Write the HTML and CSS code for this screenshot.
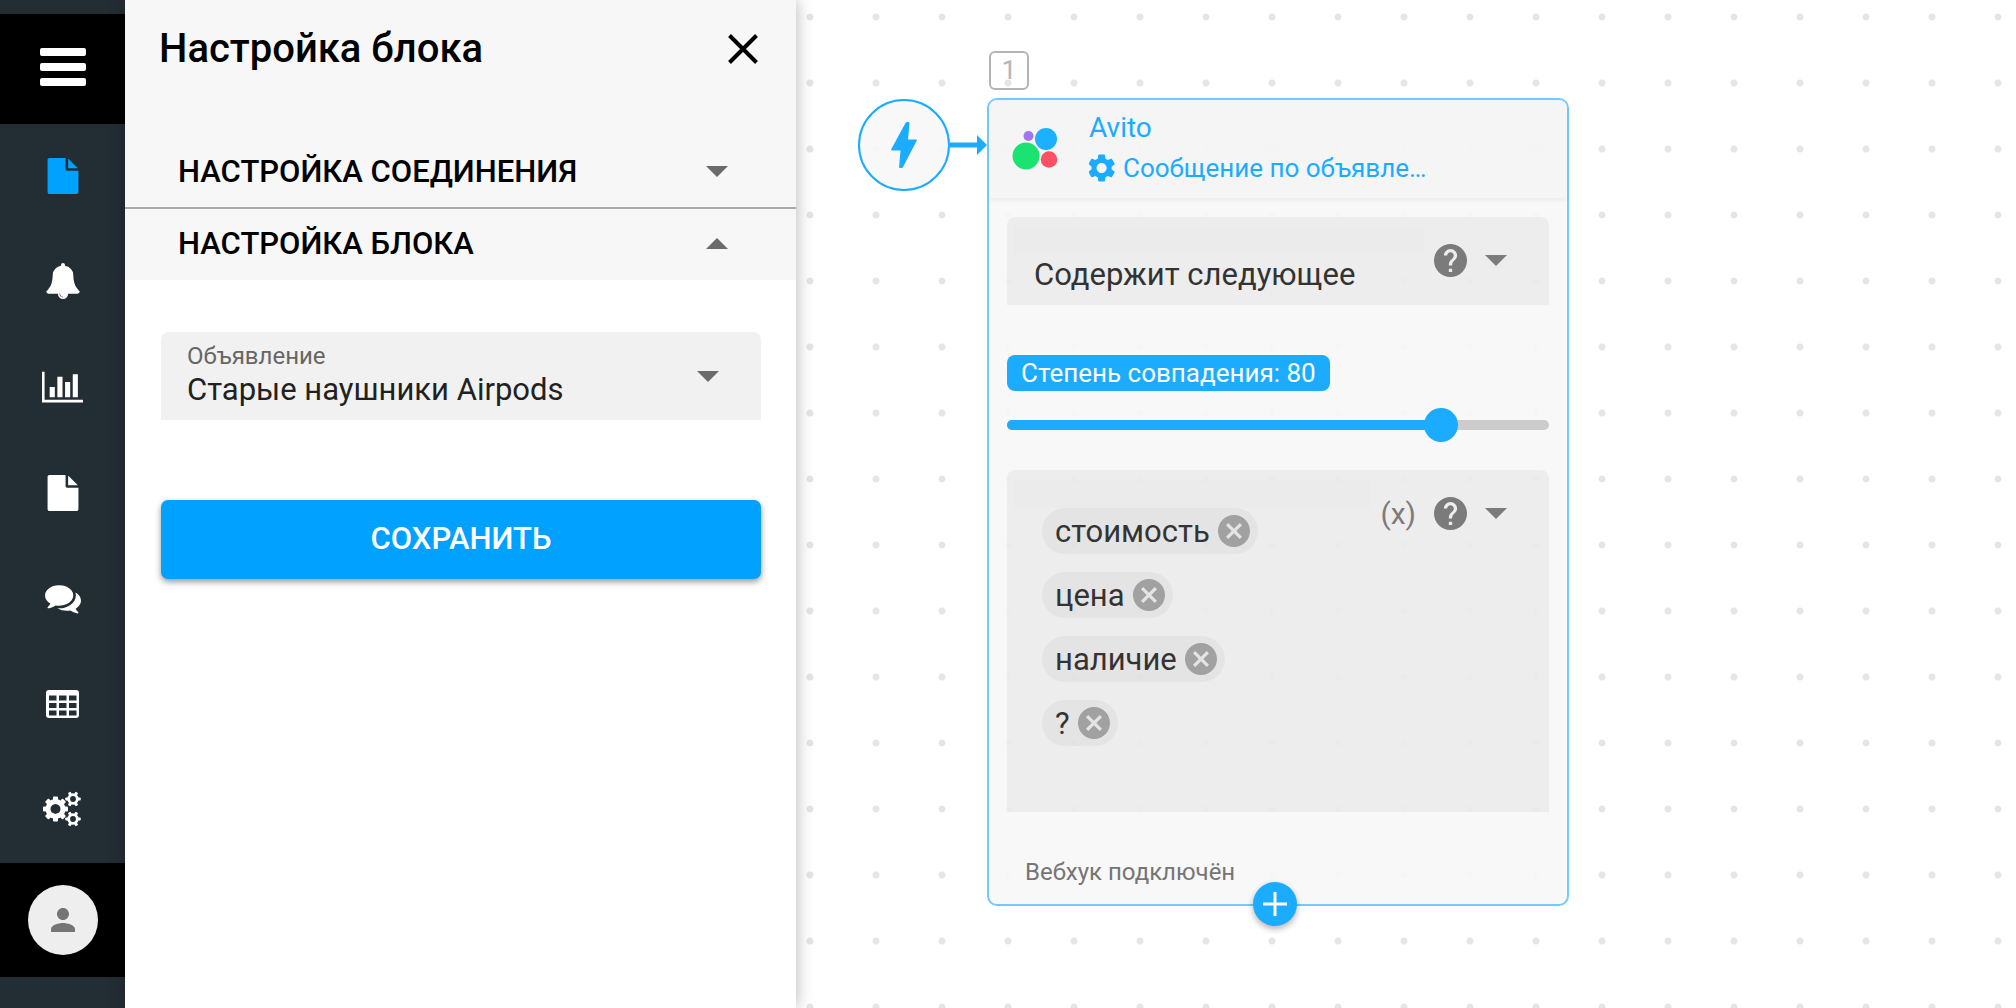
FILE: index.html
```html
<!DOCTYPE html>
<html lang="ru">

<head>
    <meta charset="UTF-8">
    <meta name="viewport" content="width=device-width, initial-scale=1.0">
    <link rel="stylesheet" href="styles.css">
    <title>Настройка блока</title>
</head>

<body>

    <!-- icons used more than once -->
    <svg class="sprite" aria-hidden="true">
        <symbol id="icon-file" viewBox="0 0 1792 1792">
            <path d="M1152 512v-472q22 14 36 28l408 408q14 14 28 36h-472zm-128 32q0 40 28 68t68 28h544v1056q0 40-28 68t-68 28h-1344q-40 0-68-28t-28-68v-1600q0-40 28-68t68-28h800v544z" />
        </symbol>
        <symbol id="icon-help" viewBox="2 2 20 20">
            <path d="M12 2C6.48 2 2 6.48 2 12s4.48 10 10 10 10-4.48 10-10S17.52 2 12 2zm1 17h-2v-2h2v2zm2.07-7.75l-.9.92C13.45 12.9 13 13.5 13 15h-2v-.5c0-1.1.45-2.1 1.17-2.83l1.24-1.26c.37-.36.59-.86.59-1.41 0-1.1-.9-2-2-2s-2 .9-2 2H8c0-2.21 1.79-4 4-4s4 1.79 4 4c0 .88-.36 1.68-.93 2.25z" />
        </symbol>
        <symbol id="icon-cancel" viewBox="2 2 20 20">
            <path d="M12 2C6.47 2 2 6.47 2 12s4.47 10 10 10 10-4.47 10-10S17.53 2 12 2zm5 13.59L15.59 17 12 13.41 8.41 17 7 15.59 10.59 12 7 8.41 8.41 7 12 10.59 15.59 7 17 8.41 13.41 12 17 15.59z" />
        </symbol>
        <symbol id="icon-cog-small" viewBox="-8 -8 16 16">
            <circle r="4.3" fill="none" stroke="currentColor" stroke-width="2.8" />
            <rect x="-1.5" y="-7.7" width="3" height="3.4" rx=".7" transform="rotate(30)" />
            <rect x="-1.5" y="-7.7" width="3" height="3.4" rx=".7" transform="rotate(90)" />
            <rect x="-1.5" y="-7.7" width="3" height="3.4" rx=".7" transform="rotate(150)" />
            <rect x="-1.5" y="-7.7" width="3" height="3.4" rx=".7" transform="rotate(210)" />
            <rect x="-1.5" y="-7.7" width="3" height="3.4" rx=".7" transform="rotate(270)" />
            <rect x="-1.5" y="-7.7" width="3" height="3.4" rx=".7" transform="rotate(330)" />
        </symbol>
    </svg>

    <div class="sidebar">
        <button class="menu-btn" aria-label="Меню">
            <svg width="46" height="38" viewBox="0 0 46 38">
                <rect width="46" height="8" rx="2" />
                <rect y="15" width="46" height="8" rx="2" />
                <rect y="30" width="46" height="8" rx="2" />
            </svg>
        </button>

        <nav class="nav">
            <a href="#" class="active" aria-label="Сценарии">
                <svg width="36" height="36"><use href="#icon-file" /></svg>
            </a>
            <a href="#" aria-label="Уведомления">
                <svg width="36" height="36" viewBox="0 0 1792 1792">
                    <path d="M912 1696q0-16-16-16-59 0-101.5-42.5t-42.5-101.5q0-16-16-16t-16 16q0 73 51.5 124.5t124.5 51.5q16 0 16-16zm816-288q0 52-38 90t-90 38h-448q0 106-75 181t-181 75-181-75-75-181h-448q-52 0-90-38t-38-90q50-42 91-88t85-119.5 74.5-158.5 50-206 19.5-260q0-152 117-282.5t307-158.5q-8-19-8-39 0-40 28-68t68-28 68 28 28 68q0 20-8 39 190 28 307 158.5t117 282.5q0 139 19.5 260t50 206 74.5 158.5 85 119.5 91 88z" />
                </svg>
            </a>
            <a href="#" aria-label="Статистика">
                <svg width="41" height="36" viewBox="0 0 2048 1792">
                    <path d="M640 896v512h-256v-512h256zm384-512v1024h-256v-1024h256zm1024 1152v128h-2048v-1536h128v1408h1920zm-640-896v768h-256v-768h256zm384-384v1152h-256v-1152h256z" />
                </svg>
            </a>
            <a href="#" aria-label="Документы">
                <svg width="36" height="36"><use href="#icon-file" /></svg>
            </a>
            <a href="#" aria-label="Диалоги">
                <svg width="36" height="36" viewBox="0 0 1792 1792">
                    <path d="M1408 768q0 139-94 257t-256.5 186.5-353.5 68.5q-86 0-176-16-124 88-278 128-36 9-86 16h-3q-11 0-20.5-8t-11.5-21q-1-3-1-6.5t.5-6.5 2-6l2.5-5 3.5-5.5 4-5 4.5-5 4-4.5q5-6 23-25t26-29.5 22.5-29 25-38.5 20.5-44q-124-72-195-177t-71-224q0-139 94-257t256.5-186.5 353.5-68.5 353.5 68.5 256.5 186.5 94 257zm384 256q0 120-71 224.5t-195 176.5q10 24 20.5 44t25 38.5 22.5 29 26 29.5 23 25q1 1 4 4.5t4.5 5 4 5 3.5 5.5l2.5 5 2 6 .5 6.5-1 6.5q-3 14-13 22t-22 7q-50-7-86-16-154-40-278-128-90 16-176 16-271 0-472-132 58 4 88 4 161 0 309-45t264-129q125-92 192-212t67-254q0-77-23-152 129 71 204 178t75 230z" />
                </svg>
            </a>
            <a href="#" aria-label="Таблицы">
                <svg width="33" height="28" viewBox="0 0 33 28">
                    <path fill-rule="evenodd" d="M3 0h27a3 3 0 0 1 3 3v22a3 3 0 0 1-3 3H3a3 3 0 0 1-3-3V3a3 3 0 0 1 3-3zM3 5.5v5h7.5v-5zM13 5.5v5h7.5v-5zM23 5.500v5h7.5v-5zM3 13v5h7.5v-5zM13 13v5h7.5v-5zM23 13v5h7.5v-5zM3 20.5v5h7.5v-5zM13 20.5v5h7.5v-5zM23 20.5v5h7.5v-5z" />
                </svg>
            </a>
            <a href="#" aria-label="Настройки">
                <svg width="39" height="36" viewBox="0 0 39 36">
                    <mask id="cog-hole" maskUnits="userSpaceOnUse" x="-13" y="-13" width="26" height="26">
                        <rect x="-13" y="-13" width="26" height="26" fill="#fff" />
                        <circle r="5" fill="#000" />
                    </mask>
                    <g transform="translate(12.5 18)">
                        <circle r="7.5" fill="none" stroke="currentColor" stroke-width="5" />
                        <rect x="-2.5" y="-12.5" width="5" height="25" rx="1" mask="url(#cog-hole)" />
                        <rect x="-2.5" y="-12.5" width="5" height="4" rx="1" transform="rotate(45)" />
                        <rect x="-2.5" y="-12.5" width="5" height="4" rx="1" transform="rotate(90)" />
                        <rect x="-2.5" y="-12.5" width="5" height="4" rx="1" transform="rotate(135)" />
                        <rect x="-2.5" y="-12.5" width="5" height="4" rx="1" transform="rotate(225)" />
                        <rect x="-2.5" y="-12.5" width="5" height="4" rx="1" transform="rotate(270)" />
                        <rect x="-2.5" y="-12.5" width="5" height="4" rx="1" transform="rotate(315)" />
                    </g>
                    <use href="#icon-cog-small" x="22" y="0" width="16" height="16" />
                    <use href="#icon-cog-small" x="22" y="20" width="16" height="16" />
                </svg>
            </a>
        </nav>

        <div class="profile">
            <button class="avatar" aria-label="Профиль">
                <svg width="36" height="36" viewBox="0 0 24 24">
                    <path d="M12 12c2.21 0 4-1.79 4-4s-1.79-4-4-4-4 1.79-4 4 1.79 4 4 4zm0 2c-2.67 0-8 1.34-8 4v2h16v-2c0-2.66-5.33-4-8-4z" />
                </svg>
            </button>
        </div>
    </div>

    <div class="panel">
        <div class="panel-header">
            <h2>Настройка блока</h2>
            <button class="close-btn" aria-label="Закрыть">
                <svg width="30" height="30" viewBox="0 0 30 30">
                    <path d="M1.5 1.5l27 27M28.5 1.5l-27 27" stroke="currentColor" stroke-width="4" />
                </svg>
            </button>
        </div>

        <button class="section-title">
            НАСТРОЙКА СОЕДИНЕНИЯ
            <span class="arrow"></span>
        </button>
        <button class="section-title">
            НАСТРОЙКА БЛОКА
            <span class="arrow up"></span>
        </button>

        <form class="panel-form">
            <div class="select-box">
                <div class="select-main">
                    <label for="listing">Объявление</label>
                    <select id="listing">
                        <option>Старые наушники Airpods</option>
                    </select>
                </div>
                <span class="arrow"></span>
            </div>
            <button type="button" class="save-btn">СОХРАНИТЬ</button>
        </form>
    </div>

    <div class="canvas">
        <div class="start-node">
            <div class="start-circle">
                <svg width="26" height="46" viewBox="0 0 26 46">
                    <path d="M16 0h1.5q1.2 0 1 1.2L17 17.5h8q1.2 0 .7 1.2L12 45q-.5 1-1.5 1H9.3q-1.3 0-1.2-1.2L9.5 28.5H1q-1.3 0-.8-1.3L14.5 1Q15 0 16 0z" />
                </svg>
            </div>
            <svg class="link" width="37" height="20" viewBox="0 0 37 20">
                <path d="M0 7.500h27V0l10 10-10 10v-7.500H0z" />
            </svg>
        </div>

        <div class="node-number">1</div>

        <div class="node">
            <div class="node-header">
                <svg class="logo" width="46" height="42" viewBox="0 0 46 42">
                    <circle cx="16.5" cy="8" r="5" fill="#a374ee" />
                    <circle cx="34" cy="11" r="11" fill="#1db0ff" />
                    <circle cx="14" cy="28" r="13.5" fill="#1be372" />
                    <circle cx="37" cy="31.5" r="8.3" fill="#ff4f62" />
                </svg>
                <div class="node-title">
                    <h3>Avito</h3>
                    <a href="#">
                        <svg width="28" height="28" viewBox="3 2 20 20">
                            <path d="M19.14 12.94c.04-.3.06-.61.06-.94 0-.32-.02-.64-.07-.94l2.03-1.58c.18-.14.23-.41.12-.61l-1.92-3.32c-.12-.22-.37-.29-.59-.22l-2.39.96c-.5-.38-1.03-.7-1.62-.94L14.4 2.81c-.04-.24-.24-.41-.48-.41h-3.84c-.24 0-.43.17-.47.41L9.25 5.35c-.59.24-1.13.57-1.62.94l-2.39-.96c-.22-.08-.47 0-.59.22L2.74 8.87c-.12.21-.08.47.12.61l2.03 1.58c-.05.3-.09.63-.09.94s.02.64.07.94l-2.03 1.58c-.18.14-.23.41-.12.61l1.92 3.32c.12.22.37.29.59.22l2.39-.96c.5.38 1.03.7 1.62.94l.36 2.54c.05.24.24.41.48.41h3.84c.24 0 .44-.17.47-.41l.36-2.54c.59-.24 1.13-.56 1.62-.94l2.39.96c.22.08.47 0 .59-.22l1.92-3.32c.12-.22.07-.47-.12-.61l-2.01-1.58zM12 15.6c-1.98 0-3.6-1.62-3.6-3.6s1.62-3.6 3.6-3.6 3.6 1.62 3.6 3.6-1.62 3.6-3.6 3.6z" />
                        </svg>
                        Сообщение по объявле…
                    </a>
                </div>
            </div>

            <div class="node-body">
                <div class="node-field">
                    <div class="node-field-main">
                        <div class="field-label"></div>
                        <select aria-label="Условие">
                            <option>Содержит следующее</option>
                        </select>
                    </div>
                    <div class="actions">
                        <button aria-label="Справка"><svg width="33" height="33"><use href="#icon-help" /></svg></button>
                        <span class="arrow"></span>
                    </div>
                </div>

                <label class="match-label" for="match">Степень совпадения: 80</label>
                <div class="slider">
                    <div class="slider-rail">
                        <div class="slider-fill" style="width: 80%"></div>
                    </div>
                    <input type="range" id="match" min="0" max="100" value="80">
                </div>

                <div class="node-field keywords">
                    <div class="node-field-main">
                        <div class="field-label"></div>
                        <div class="chips">
                            <span class="chip">стоимость <button aria-label="Удалить"><svg width="32" height="32"><use href="#icon-cancel" /></svg></button></span>
                            <span class="chip">цена <button aria-label="Удалить"><svg width="32" height="32"><use href="#icon-cancel" /></svg></button></span>
                            <span class="chip">наличие <button aria-label="Удалить"><svg width="32" height="32"><use href="#icon-cancel" /></svg></button></span>
                            <span class="chip">? <button aria-label="Удалить"><svg width="32" height="32"><use href="#icon-cancel" /></svg></button></span>
                        </div>
                    </div>
                    <div class="actions">
                        <button>(x)</button>
                        <button aria-label="Справка"><svg width="33" height="33"><use href="#icon-help" /></svg></button>
                        <span class="arrow"></span>
                    </div>
                </div>

                <p class="status">Вебхук подключён</p>
            </div>

            <button class="add-btn" aria-label="Добавить">
                <svg width="24" height="24" viewBox="0 0 24 24">
                    <path d="M12 0v24M0 12h24" stroke="currentColor" stroke-width="3" />
                </svg>
            </button>
        </div>
    </div>

</body>

</html>
```
FILE: styles.css
```css
* {
    box-sizing: border-box;
}

body {
    font-family: Roboto, "Noto Sans", sans-serif;
    margin: 0;
    display: flex;
    min-height: 100vh;
    overflow: hidden;
    color: #000;
}

h2, h3, p {
    margin: 0;
}

button, select {
    font: inherit;
    color: inherit;
    background: none;
    border: none;
    padding: 0;
}

button {
    cursor: pointer;
}

a {
    color: inherit;
    text-decoration: none;
}

svg {
    display: block;
    flex: none;
    fill: currentColor;
}

.sprite {
    display: none;
}

.arrow {
    flex: none;
    border: 11px solid transparent;
    border-top-color: #6b6b6b;
    border-bottom: 0;
}

.arrow.up {
    border-top: 0;
    border-bottom: 11px solid #6b6b6b;
}

/* sidebar */
.sidebar {
    flex: 0 0 125px;
    display: flex;
    flex-direction: column;
    padding: 14px 0 31px;
    background-color: #232e34;
    color: #fff;
}

.menu-btn {
    height: 110px;
    display: flex;
    align-items: center;
    justify-content: center;
    padding-bottom: 4px;
    background-color: #000;
    color: #fff;
}

.nav {
    flex: 1;
    display: flex;
    flex-direction: column;
}

.nav a {
    flex: 1;
    display: flex;
    align-items: center;
    justify-content: center;
    padding-bottom: 2px;
}

.nav a.active {
    color: #00a2ff;
}

.profile {
    padding: 22px 0;
    display: flex;
    justify-content: center;
    background-color: #000;
}

.avatar {
    width: 70px;
    height: 70px;
    display: flex;
    align-items: center;
    justify-content: center;
    border-radius: 50%;
    background-color: #eee;
    color: #757575;
}

/* block settings */
.panel {
    flex: 0 0 671px;
    z-index: 1;
    background-color: #fff;
    box-shadow: 0 0 16px rgba(0, 0, 0, 0.3);
}

.panel-header {
    display: flex;
    align-items: center;
    justify-content: space-between;
    padding: 25px 38px 62px 34px;
    background-color: #f7f7f7;
}

.panel-header h2 {
    font-size: 40px;
    font-weight: 500;
    line-height: 48px;
}

.section-title {
    width: 100%;
    height: 72px;
    display: flex;
    align-items: center;
    justify-content: space-between;
    padding: 0 68px 0 53px;
    background-color: #f7f7f7;
    font-size: 31px;
    font-weight: 500;
}

.section-title + .section-title {
    height: 73px;
    padding-bottom: 3px;
    border-top: 2px solid #aaa;
}

.panel-form {
    display: flex;
    flex-direction: column;
    gap: 80px;
    padding: 52px 35px 52px 36px;
}

.select-box {
    display: flex;
    align-items: center;
    padding: 10px 42px 10px 26px;
    border-radius: 8px 8px 0 0;
    background-color: #f1f1f1;
}

.select-main {
    flex: 1;
    display: flex;
    flex-direction: column;
}

.select-main label {
    font-size: 24px;
    line-height: 28px;
    color: #666;
}

select {
    appearance: none;
    width: 100%;
    height: 40px;
    padding-bottom: 2px;
    font-size: 31px;
    color: #212121;
}

.save-btn {
    height: 79px;
    padding-bottom: 2px;
    border-radius: 7px;
    background-color: #00a1ff;
    color: #fff;
    font-size: 31px;
    font-weight: 500;
    box-shadow: 0 3px 6px rgba(0, 0, 0, 0.4);
}

/* canvas */
.canvas {
    flex: 1;
    position: relative;
    background-color: #fff;
    background-image: radial-gradient(circle, #e5e5e5 3px, transparent 4px);
    background-size: 66px 66px;
    background-position: -19px -16px;
}

.start-node {
    position: absolute;
    left: 62px;
    top: 99px;
    display: flex;
    align-items: center;
    color: #1bacff;
}

.start-circle {
    width: 92px;
    height: 92px;
    display: flex;
    align-items: center;
    justify-content: center;
    border: 2px solid #1bacff;
    border-radius: 50%;
    background-color: rgba(247, 247, 247, 0.9);
}

.node-number {
    position: absolute;
    left: 193px;
    top: 51px;
    width: 40px;
    height: 39px;
    border: 2px solid #b4b4b4;
    border-radius: 6px;
    font-size: 26px;
    line-height: 34px;
    text-align: center;
    color: #b4b4b4;
}

.node {
    position: absolute;
    left: 191px;
    top: 98px;
    width: 582px;
    border: 2px solid #74caff;
    border-radius: 10px;
    background-color: rgba(247, 247, 247, 0.92);
}

.node-header {
    height: 98px;
    display: flex;
    align-items: center;
    gap: 31px;
    padding: 0 23px;
    border-radius: 8px 8px 0 0;
    background-color: rgba(244, 244, 244, 0.7);
    box-shadow: 0 2px 4px rgba(0, 0, 0, 0.06);
    color: #1bacff;
}

.node-title {
    padding-bottom: 2px;
}

.node-title h3 {
    font-size: 28px;
    font-weight: 400;
    line-height: 40px;
}

.node-title a {
    display: flex;
    align-items: center;
    gap: 6px;
    font-size: 26px;
    line-height: 40px;
}

.node-body {
    display: flex;
    flex-direction: column;
    padding: 19px 18px 18px;
}

.node-field {
    display: flex;
    gap: 10px;
    padding-left: 7px;
    padding-right: 42px;
    border-radius: 8px 8px 0 0;
    background-color: rgba(0, 0, 0, 0.045);
    color: #333;
}

.node-field-main {
    flex: 1;
    padding: 10px 0;
}

.field-label {
    height: 28px;
    background-color: rgba(0, 0, 0, 0.008);
}

.node-field select {
    padding-left: 20px;
    color: #333;
}

.actions {
    height: 86px;
    display: flex;
    align-items: center;
    gap: 18px;
    font-size: 30px;
    color: #7b7b7b;
}

.actions .arrow {
    border-top-color: #7b7b7b;
}

.match-label {
    align-self: flex-start;
    margin-top: 50px;
    padding: 0 14px;
    border-radius: 8px;
    background-color: #1bacff;
    color: #fff;
    font-size: 26px;
    line-height: 36px;
}

.slider {
    position: relative;
    height: 34px;
    display: flex;
    align-items: center;
    margin: 17px 0 28px;
}

.slider-rail {
    flex: 1;
    height: 10px;
    border-radius: 5px;
    background-color: #ccc;
}

.slider-fill {
    height: 100%;
    border-radius: 5px;
    background-color: #1bacff;
}

/* wider than the rail by half a thumb on each side */
.slider input {
    appearance: none;
    position: absolute;
    left: -17px;
    width: calc(100% + 34px);
    height: 34px;
    margin: 0;
    background: none;
}

.slider input::-webkit-slider-thumb {
    appearance: none;
    width: 34px;
    height: 34px;
    border-radius: 50%;
    background-color: #1bacff;
}

.keywords {
    min-height: 342px;
}

.chips {
    display: flex;
    flex-direction: column;
    align-items: flex-start;
    gap: 18px;
    padding-left: 28px;
}

.chip {
    height: 46px;
    display: flex;
    align-items: center;
    gap: 8px;
    padding: 0 8px 0 13px;
    border-radius: 23px;
    background-color: rgba(0, 0, 0, 0.035);
    font-size: 31px;
}

.chip button {
    color: #a1a1a1;
}

.status {
    margin-top: 46px;
    padding-left: 18px;
    font-size: 24px;
    line-height: 28px;
    color: #757575;
}

.add-btn {
    position: absolute;
    left: 50%;
    bottom: -22px;
    width: 44px;
    height: 44px;
    margin-left: -25px;
    display: flex;
    align-items: center;
    justify-content: center;
    border-radius: 50%;
    background-color: #1bacff;
    color: #fff;
    box-shadow: 0 3px 6px rgba(0, 0, 0, 0.3);
}
```
